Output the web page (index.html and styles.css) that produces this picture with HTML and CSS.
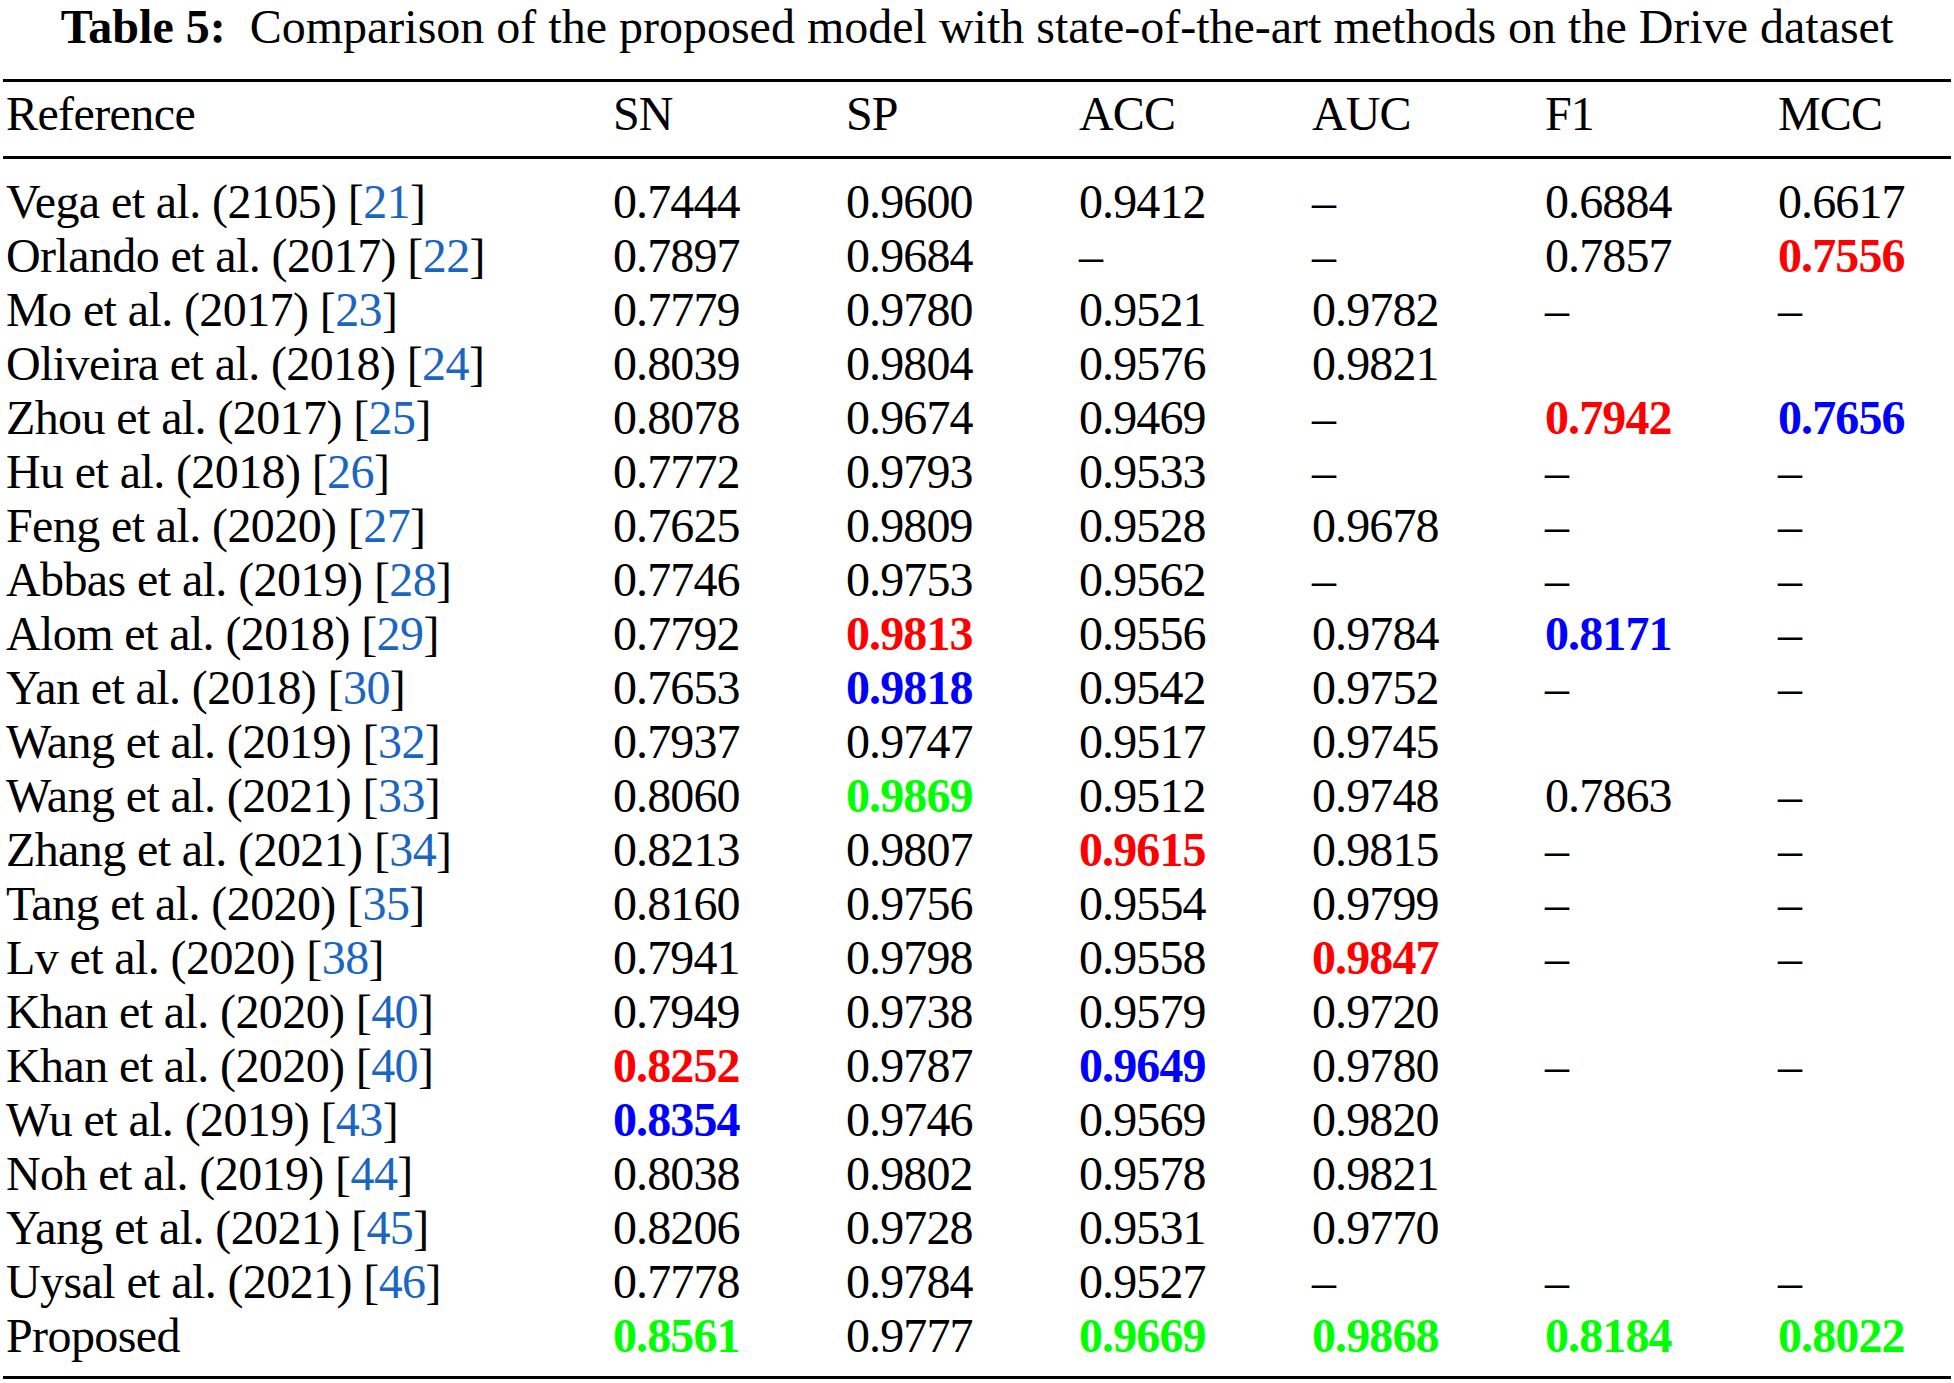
FILE: index.html
```html
<!DOCTYPE html>
<html lang="en">
<head>
<meta charset="utf-8">
<title>Table 5</title>
<link rel="stylesheet" href="styles.css">
</head>
<body>
<div class="page">
  <div class="caption"><b>Table 5:</b>&nbsp; Comparison of the proposed model with state-of-the-art methods on the Drive dataset</div>
  <table class="results">
    <colgroup>
      <col class="c-ref"><col class="c-num"><col class="c-num"><col class="c-num"><col class="c-num"><col class="c-num"><col class="c-last">
    </colgroup>
    <thead>
      <tr><th>Reference</th><th>SN</th><th>SP</th><th>ACC</th><th>AUC</th><th>F1</th><th>MCC</th></tr>
    </thead>
    <tbody>
      <tr><td>Vega et al. (2105) [<span class="cite">21</span>]</td><td>0.7444</td><td>0.9600</td><td>0.9412</td><td>–</td><td>0.6884</td><td>0.6617</td></tr>
      <tr><td>Orlando et al. (2017) [<span class="cite">22</span>]</td><td>0.7897</td><td>0.9684</td><td>–</td><td>–</td><td>0.7857</td><td><b class="red">0.7556</b></td></tr>
      <tr><td>Mo et al. (2017) [<span class="cite">23</span>]</td><td>0.7779</td><td>0.9780</td><td>0.9521</td><td>0.9782</td><td>–</td><td>–</td></tr>
      <tr><td>Oliveira et al. (2018) [<span class="cite">24</span>]</td><td>0.8039</td><td>0.9804</td><td>0.9576</td><td>0.9821</td><td></td><td></td></tr>
      <tr><td>Zhou et al. (2017) [<span class="cite">25</span>]</td><td>0.8078</td><td>0.9674</td><td>0.9469</td><td>–</td><td><b class="red">0.7942</b></td><td><b class="blue">0.7656</b></td></tr>
      <tr><td>Hu et al. (2018) [<span class="cite">26</span>]</td><td>0.7772</td><td>0.9793</td><td>0.9533</td><td>–</td><td>–</td><td>–</td></tr>
      <tr><td>Feng et al. (2020) [<span class="cite">27</span>]</td><td>0.7625</td><td>0.9809</td><td>0.9528</td><td>0.9678</td><td>–</td><td>–</td></tr>
      <tr><td>Abbas et al. (2019) [<span class="cite">28</span>]</td><td>0.7746</td><td>0.9753</td><td>0.9562</td><td>–</td><td>–</td><td>–</td></tr>
      <tr><td>Alom et al. (2018) [<span class="cite">29</span>]</td><td>0.7792</td><td><b class="red">0.9813</b></td><td>0.9556</td><td>0.9784</td><td><b class="blue">0.8171</b></td><td>–</td></tr>
      <tr><td>Yan et al. (2018) [<span class="cite">30</span>]</td><td>0.7653</td><td><b class="blue">0.9818</b></td><td>0.9542</td><td>0.9752</td><td>–</td><td>–</td></tr>
      <tr><td>Wang et al. (2019) [<span class="cite">32</span>]</td><td>0.7937</td><td>0.9747</td><td>0.9517</td><td>0.9745</td><td></td><td></td></tr>
      <tr><td>Wang et al. (2021) [<span class="cite">33</span>]</td><td>0.8060</td><td><b class="green">0.9869</b></td><td>0.9512</td><td>0.9748</td><td>0.7863</td><td>–</td></tr>
      <tr><td>Zhang et al. (2021) [<span class="cite">34</span>]</td><td>0.8213</td><td>0.9807</td><td><b class="red">0.9615</b></td><td>0.9815</td><td>–</td><td>–</td></tr>
      <tr><td>Tang et al. (2020) [<span class="cite">35</span>]</td><td>0.8160</td><td>0.9756</td><td>0.9554</td><td>0.9799</td><td>–</td><td>–</td></tr>
      <tr><td>Lv et al. (2020) [<span class="cite">38</span>]</td><td>0.7941</td><td>0.9798</td><td>0.9558</td><td><b class="red">0.9847</b></td><td>–</td><td>–</td></tr>
      <tr><td>Khan et al. (2020) [<span class="cite">40</span>]</td><td>0.7949</td><td>0.9738</td><td>0.9579</td><td>0.9720</td><td></td><td></td></tr>
      <tr><td>Khan et al. (2020) [<span class="cite">40</span>]</td><td><b class="red">0.8252</b></td><td>0.9787</td><td><b class="blue">0.9649</b></td><td>0.9780</td><td>–</td><td>–</td></tr>
      <tr><td>Wu et al. (2019) [<span class="cite">43</span>]</td><td><b class="blue">0.8354</b></td><td>0.9746</td><td>0.9569</td><td>0.9820</td><td></td><td></td></tr>
      <tr><td>Noh et al. (2019) [<span class="cite">44</span>]</td><td>0.8038</td><td>0.9802</td><td>0.9578</td><td>0.9821</td><td></td><td></td></tr>
      <tr><td>Yang et al. (2021) [<span class="cite">45</span>]</td><td>0.8206</td><td>0.9728</td><td>0.9531</td><td>0.9770</td><td></td><td></td></tr>
      <tr><td>Uysal et al. (2021) [<span class="cite">46</span>]</td><td>0.7778</td><td>0.9784</td><td>0.9527</td><td>–</td><td>–</td><td>–</td></tr>
      <tr><td>Proposed</td><td><b class="green">0.8561</b></td><td>0.9777</td><td><b class="green">0.9669</b></td><td><b class="green">0.9868</b></td><td><b class="green">0.8184</b></td><td><b class="green">0.8022</b></td></tr>
    </tbody>
  </table>
</div>
</body>
</html>
```

FILE: styles.css
```css
html, body {
  margin: 0;
  padding: 0;
  background: #ffffff;
}

body {
  font-family: "Liberation Serif", "Times New Roman", serif;
  color: #000000;
}

.page {
  width: 1954px;
  height: 1383px;
  padding: 0 3px;
  box-sizing: border-box;
}

.caption {
  font-size: 48px;
  line-height: 54px;
  height: 54px;
  text-align: center;
  white-space: nowrap;
}

.results {
  margin-top: 25px;
  width: 1948px;
  border-collapse: collapse;
  table-layout: fixed;
  font-size: 48px;
  letter-spacing: -0.9px;
  border-top: 3px solid #000;
  border-bottom: 3px solid #000;
}

.c-ref { width: 607px; }
.c-num { width: 233px; }
.c-last { width: 176px; }

.results th,
.results td {
  text-align: left;
  font-weight: normal;
  padding: 0 0 0 3px;
  white-space: nowrap;
  vertical-align: middle;
}

.results th:first-child,
.results td:first-child {
  letter-spacing: -0.6px;
}

.results thead th {
  height: 64px;
  line-height: 64px;
  padding-bottom: 10px;
  border-bottom: 3px solid #000;
}

.results tbody td {
  height: 54px;
  line-height: 54px;
}

.results tbody tr:first-child td {
  padding-top: 16px;
}

.results tbody tr:last-child td {
  padding-bottom: 13px;
}

.cite { color: #1a66c0; }
.red { color: #ff0000; font-weight: bold; }
.blue { color: #0000ff; font-weight: bold; }
.green { color: #00ff00; font-weight: bold; }
```
